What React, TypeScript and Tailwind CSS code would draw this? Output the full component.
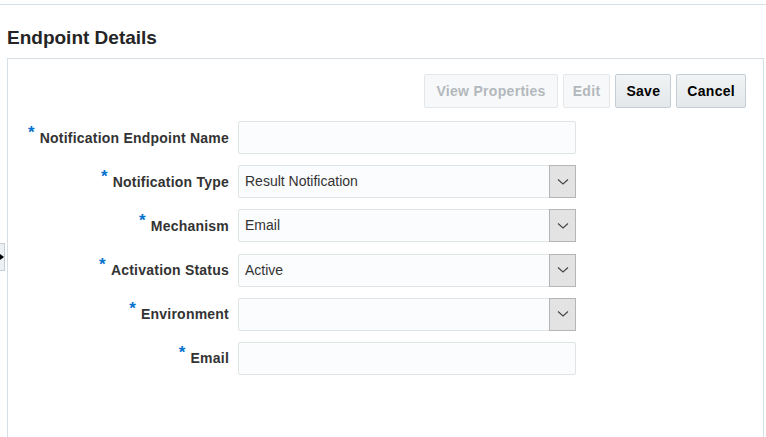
import React from 'react';

const fields = [
  { label: 'Notification Endpoint Name', value: '', select: false },
  { label: 'Notification Type', value: 'Result Notification', select: true },
  { label: 'Mechanism', value: 'Email', select: true },
  { label: 'Activation Status', value: 'Active', select: true },
  { label: 'Environment', value: '', select: true },
  { label: 'Email', value: '', select: false },
];

function Chevron() {
  return (
    <svg width="12" height="8" viewBox="0 0 12 8" fill="none">
      <path d="M1 1.5L6 6L11 1.5" stroke="#444" strokeWidth="1.1" />
    </svg>
  );
}

export default function App() {
  return (
    <div
      className="relative w-[766px] h-[437px] overflow-hidden bg-white text-[#333]"
      style={{ fontFamily: '"Liberation Sans", Arial, sans-serif' }}
    >
      {/* top rule */}
      <div className="h-[4px]" />
      <div className="h-px bg-[#d6dfe6]" />

      <h1 className="ml-[7px] mt-[20px] text-[19px] font-bold leading-[26px] text-[#252525]">
        Endpoint Details
      </h1>

      {/* panel */}
      <div className="ml-[7px] mr-[2px] mt-[7px] h-[400px] border border-[#d6dfe6] border-b-0">
        {/* toolbar */}
        <div className="flex justify-end gap-[5px] pr-[17px] pt-[15px] tracking-[0.3px]">
          <button className="h-[34px] px-[11px] rounded-[2px] border border-[#e3e7ea] bg-[#f7f8f9] text-[14px] font-bold text-[#b3b8bd]">
            View Properties
          </button>
          <button className="h-[34px] px-[9px] rounded-[2px] border border-[#e3e7ea] bg-[#f7f8f9] text-[14px] font-bold text-[#b3b8bd]">
            Edit
          </button>
          <button className="h-[34px] px-[10px] rounded-[2px] border border-[#c4ced7] bg-gradient-to-b from-[#f1f3f4] to-[#e4e8ea] text-[14px] font-bold text-black">
            Save
          </button>
          <button className="h-[34px] px-[10px] rounded-[2px] border border-[#c4ced7] bg-gradient-to-b from-[#f1f3f4] to-[#e4e8ea] text-[14px] font-bold text-black">
            Cancel
          </button>
        </div>

        {/* form */}
        <div className="mt-[13px] flex flex-col gap-[11.2px]">
          {fields.map((f) => (
            <div key={f.label} className="flex items-center">
              <div className="w-[230px] pr-[9px] flex justify-end items-start text-[14px] font-bold text-[#333] tracking-[0.22px]">
                <span className="text-[#0572ce] text-[17px] leading-[14px] mr-[5px] -mt-[2px]">*</span>
                <span className="leading-[20px]">{f.label}</span>
              </div>
              <div className="w-[338px] h-[33px] flex items-stretch rounded-[2px] border border-[#dfe4e7] bg-[#fbfcfd]">
                <div className="flex-1 flex items-center pl-[6px] text-[14px] text-[#333]">{f.value}</div>
                {f.select && (
                  <div className="w-[27px] -my-px -mr-px flex items-center justify-center border border-[#b5b5b5] bg-[#e3e3e3]">
                    <Chevron />
                  </div>
                )}
              </div>
            </div>
          ))}
        </div>
      </div>

      {/* left splitter handle */}
      <div className="absolute left-0 top-[243px] w-[5px] h-[28px] border border-l-0 border-[#c4ced7] bg-[#eef1f3] flex items-center">
        <div className="w-0 h-0 border-y-[3px] border-y-transparent border-l-[4px] border-l-black" />
      </div>
    </div>
  );
}
